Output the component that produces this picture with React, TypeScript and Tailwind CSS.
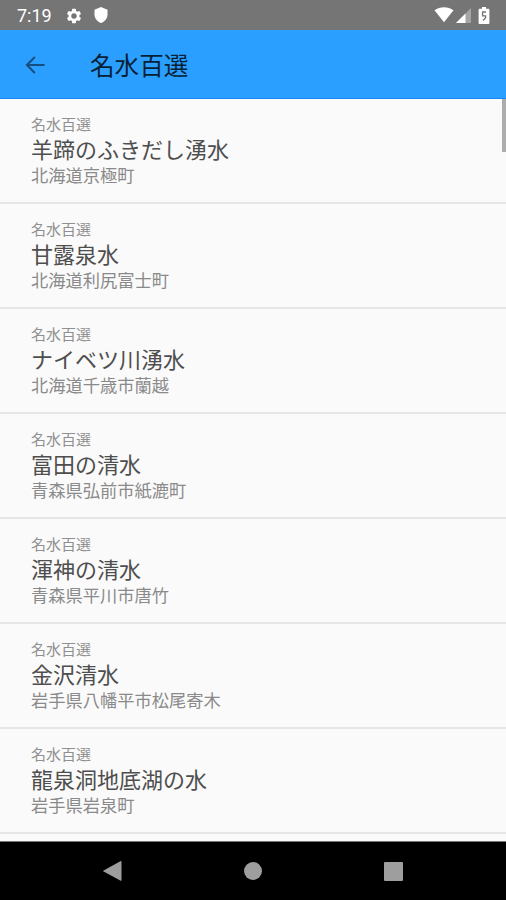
interface Spring {
  category: string;
  name: string;
  address: string;
}

const springs: Spring[] = [
  { category: '名水百選', name: '羊蹄のふきだし湧水', address: '北海道京極町' },
  { category: '名水百選', name: '甘露泉水', address: '北海道利尻富士町' },
  { category: '名水百選', name: 'ナイベツ川湧水', address: '北海道千歳市蘭越' },
  { category: '名水百選', name: '富田の清水', address: '青森県弘前市紙漉町' },
  { category: '名水百選', name: '渾神の清水', address: '青森県平川市唐竹' },
  { category: '名水百選', name: '金沢清水', address: '岩手県八幡平市松尾寄木' },
  { category: '名水百選', name: '龍泉洞地底湖の水', address: '岩手県岩泉町' },
];

function StatusBar() {
  return (
    <div className="flex h-[30px] shrink-0 items-center bg-[#757575] pr-[15px] pl-[17px] text-white">
      <span className="w-[36px] pt-[2px] font-['Roboto',sans-serif] text-[18px] leading-none">7:19</span>
      <svg className="ml-[12px] mt-px h-[18px] w-[18px]" viewBox="0 0 24 24" fill="currentColor">
        <path d="M19.14 12.94c.04-.3.06-.61.06-.94s-.02-.64-.07-.94l2.03-1.58c.18-.14.23-.41.12-.61l-1.92-3.32c-.12-.22-.37-.29-.59-.22l-2.39.96c-.5-.38-1.03-.7-1.62-.94l-.36-2.54c-.04-.24-.24-.41-.48-.41h-3.84c-.24 0-.43.17-.47.41l-.36 2.54c-.59.24-1.13.57-1.62.94l-2.39-.96c-.22-.08-.47 0-.59.22L2.74 8.87c-.12.21-.08.47.12.61l2.03 1.58c-.05.3-.09.63-.09.94s.02.64.07.94l-2.03 1.58c-.18.14-.23.41-.12.61l1.92 3.32c.12.22.37.29.59.22l2.39-.96c.5.38 1.03.7 1.62.94l.36 2.54c.05.24.24.41.48.41h3.84c.24 0 .44-.17.47-.41l.36-2.54c.59-.24 1.13-.56 1.62-.94l2.39.96c.22.08.47 0 .59-.22l1.92-3.32c.12-.22.07-.47-.12-.61l-2.01-1.58zM12 15.6a3.6 3.6 0 1 1 0-7.2 3.6 3.6 0 0 1 0 7.2z" />
      </svg>
      <svg className="ml-[11px] h-[16px] w-[14px]" viewBox="0 0 14 16" fill="currentColor">
        <path d="M7 0 .5 2.7v5.1c0 3.6 2.8 7 6.5 8.2 3.7-1.2 6.5-4.6 6.5-8.2V2.7z" />
      </svg>
      <svg className="ml-auto h-[16px] w-[20px]" viewBox="0 0 20 16" fill="currentColor">
        <path d="M.5 3.3C3.3 1.2 6.5.3 10 .3s6.7.9 9.5 3L10 15.3z" />
      </svg>
      <svg className="ml-[2px] mt-px h-[15px] w-[15px]" viewBox="0 0 15 15" fill="currentColor">
        <path d="M15 0v15H0z" opacity="0.35" />
        <path d="M9.5 5.5V15H0z" />
      </svg>
      <svg className="mr-px ml-[7px] h-[17px] w-[12px]" viewBox="0 0 12 17">
        <path fill="#fff" d="M4 0h4v1.8h2.300c.6 0 1.100.5 1.100 1.100v13c0 .6-.5 1.100-1.100 1.100H1.700C1.100 17 .6 16.500.6 15.900v-13c0-.6.5-1.100 1.100-1.100H4z" />
        <path d="M8 5H4.600v3.800h3v2L5 13.500" fill="none" stroke="#757575" strokeWidth="1.3" />
      </svg>
    </div>
  );
}

function AppBar() {
  return (
    <header className="flex h-[69px] shrink-0 items-center border-b border-[#1689ef] bg-[#2b9fff] pl-[22px]">
      <svg className="mt-px h-[26px] w-[26px]" viewBox="0 0 24 24" fill="#174e7d">
        <path d="M20.8 11v2H6.800l5.700 5.700L11.200 20 3.200 12l8-8 1.300 1.400L6.800 11z" />
      </svg>
      <h1 className="ml-[42px] text-[24.6px] leading-none text-[#071f34]">名水百選</h1>
    </header>
  );
}

function SpringRow({ spring }: { spring: Spring }) {
  return (
    <li className="h-[105px] shrink-0 border-b-2 border-[#e6e6e6] pt-[16px] pl-[31px]">
      <p className="text-[15px] leading-[18px] text-[#909090]">{spring.category}</p>
      <p className="text-[22px] leading-[30px] text-[#4e4e4e]">{spring.name}</p>
      <p className="mt-px text-[17.25px] leading-[22px] text-[#8a8a8a]">{spring.address}</p>
    </li>
  );
}

function NavigationBar() {
  return (
    <nav className="flex h-[59px] shrink-0 items-center justify-between border-t border-[#777] bg-black px-[103px]">
      <svg className="h-[20px] w-[19px]" viewBox="0 0 19 20" fill="#9e9e9e">
        <path d="M17.8 0Q18.5 0 18.5 1v18.200q0 .8-.8.500L.2 10.300q-.4-.3 0-.6z" />
      </svg>
      <div className="h-[18px] w-[18px] rounded-full bg-[#9e9e9e]" />
      <div className="h-[19px] w-[19px] rounded-[1px] bg-[#9e9e9e]" />
    </nav>
  );
}

export default function App() {
  return (
    <div className="flex h-[900px] w-[506px] flex-col overflow-hidden bg-[#fafafa] font-['Noto_Sans_CJK_JP',sans-serif]">
      <StatusBar />
      <AppBar />
      <main className="relative min-h-0 flex-1 overflow-hidden">
        <ul className="flex flex-col">
          {springs.map((spring) => (
            <SpringRow key={spring.name} spring={spring} />
          ))}
        </ul>
        {/* Scroll indicator */}
        <div className="absolute top-0 right-0 h-[53px] w-[4px] bg-[#adadad]" />
      </main>
      <NavigationBar />
    </div>
  );
}
